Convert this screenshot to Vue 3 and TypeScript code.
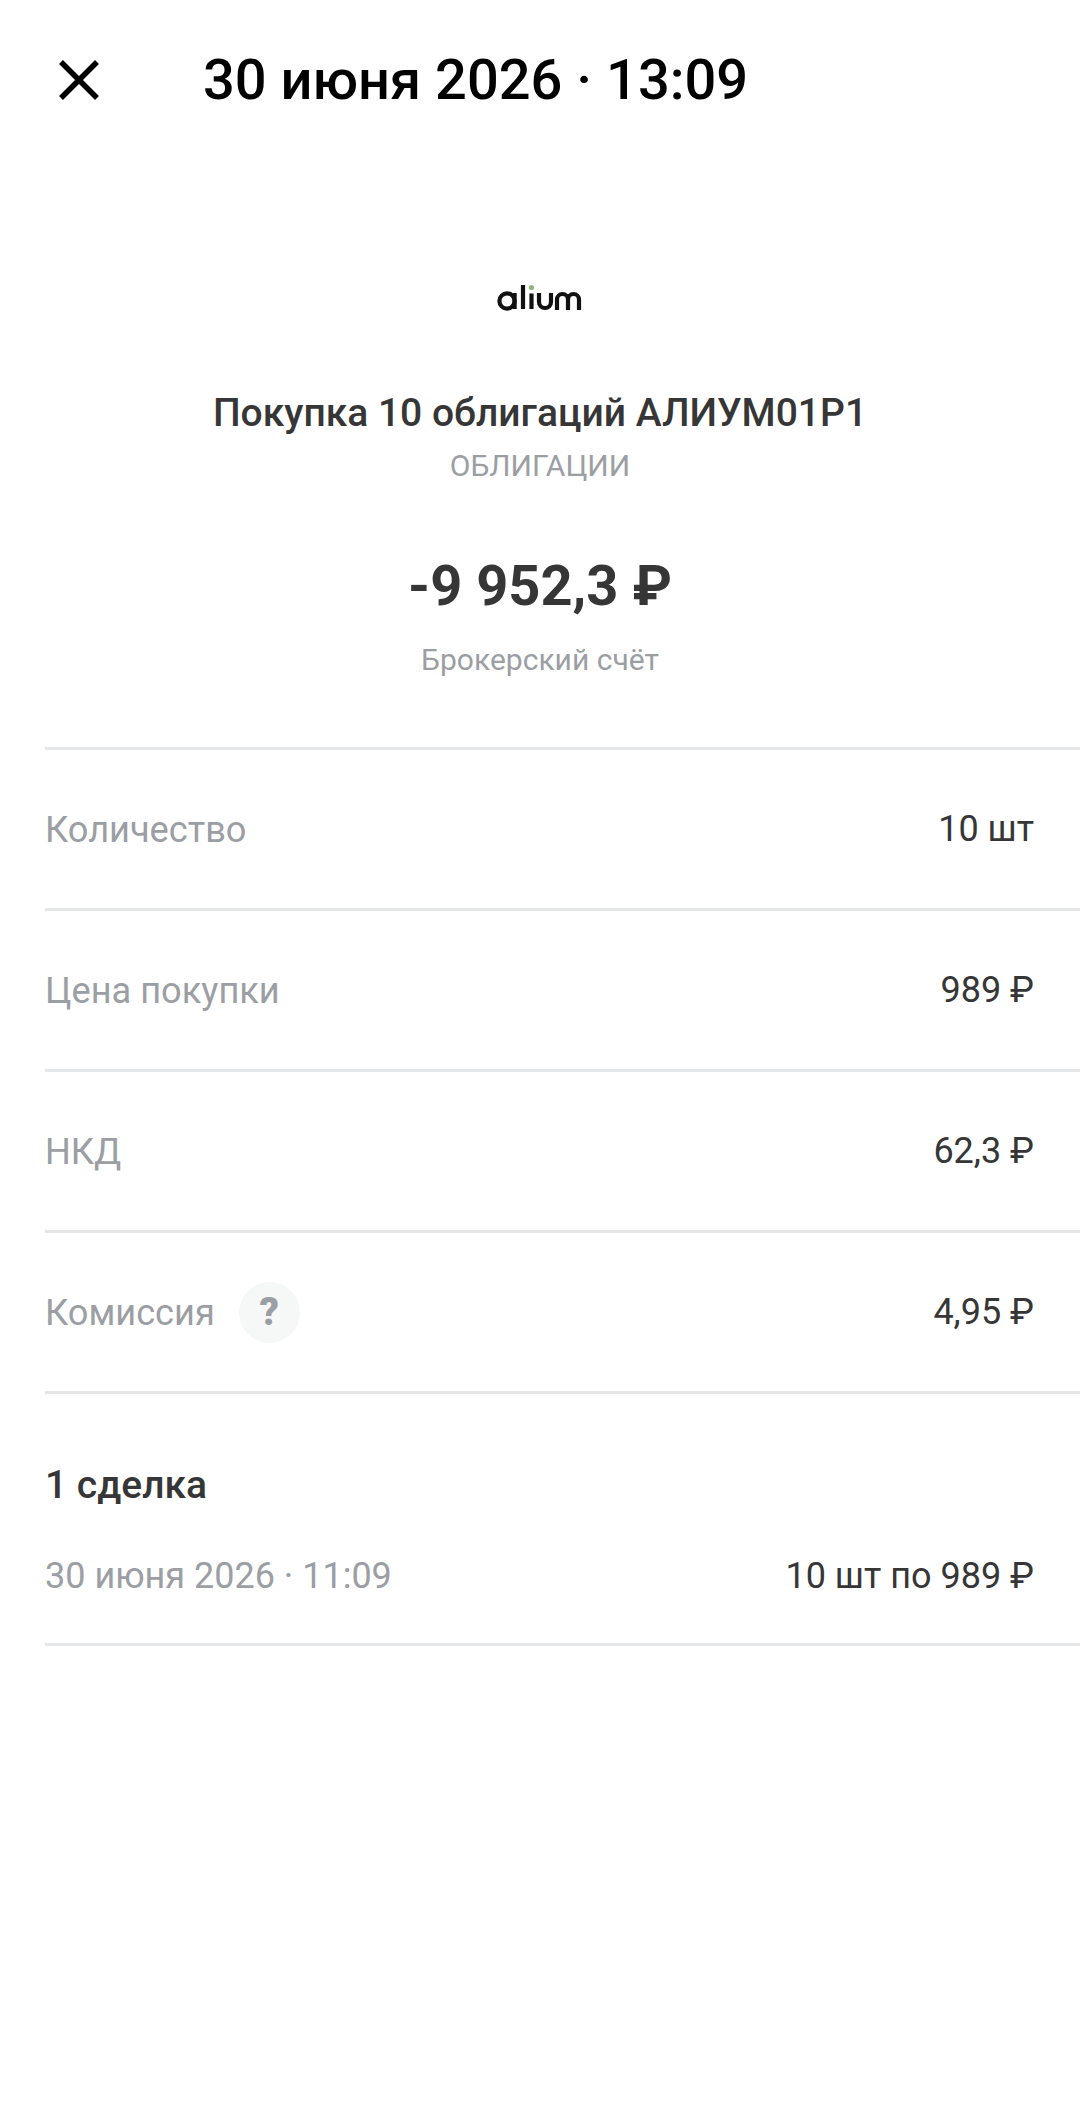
<script setup lang="ts">
interface Row { label: string; value: string; help?: boolean }
const rows: Row[] = [
  { label: 'Количество', value: '10 шт' },
  { label: 'Цена покупки', value: '989 ₽' },
  { label: 'НКД', value: '62,3 ₽' },
  { label: 'Комиссия', value: '4,95 ₽', help: true },
]
</script>

<template>
  <main class="page">
    <header class="top">
      <svg class="close" width="48" height="48" viewBox="0 0 48 48" fill="none">
        <path d="M6 6 L42 42 M42 6 L6 42" stroke="#000" stroke-width="5.5" />
      </svg>
      <h1 class="date">30 июня 2026 · 13:09</h1>
    </header>

    <section class="hero">
      <svg class="logo" width="86" height="28" viewBox="0 0 86 28" fill="none">
        <circle cx="10" cy="17" r="7.6" stroke="#111" stroke-width="4.2" />
        <path d="M17.6 9 V25" stroke="#111" stroke-width="4.2" />
        <path d="M26 1 V25" stroke="#111" stroke-width="4.2" />
        <circle cx="34.5" cy="3.5" r="2.6" fill="#8fb878" />
        <path d="M34.5 9.5 V25" stroke="#111" stroke-width="4.2" />
        <path d="M42 9 V18 a6 6 0 0 0 12 0 V9" stroke="#111" stroke-width="4.2" />
        <path d="M60 26 V15.5 a5.5 5.5 0 0 1 11 0 V26 M71 15.5 a5.5 5.5 0 0 1 11 0 V26" stroke="#111" stroke-width="4.2" />
      </svg>
      <h2 class="name">Покупка 10 облигаций АЛИУМ01Р1</h2>
      <p class="kind">ОБЛИГАЦИИ</p>
      <p class="amount">-9 952,3 ₽</p>
      <p class="account">Брокерский счёт</p>
    </section>

    <section class="rows">
      <div v-for="row in rows" :key="row.label" class="row">
        <span class="label">
          {{ row.label }}
          <span v-if="row.help" class="help">?</span>
        </span>
        <span class="value">{{ row.value }}</span>
      </div>
    </section>

    <section class="deals">
      <h3 class="deals-title">1 сделка</h3>
      <div class="deal">
        <span class="label">30 июня 2026 · 11:09</span>
        <span class="value">10 шт по 989 ₽</span>
      </div>
    </section>
  </main>
</template>

<style>
html, body { margin: 0; background: #fff; }
</style>

<style scoped>
.page {
  width: 1080px;
  height: 2121px;
  background: #fff;
  font-family: Roboto, "Noto Sans", sans-serif;
  overflow: hidden;
}
h1, h2, h3, p { margin: 0; font-weight: 400; }
.top {
  height: 160px;
  display: flex;
  align-items: center;
  padding-left: 55px;
  box-sizing: border-box;
}
.close { flex: none; }
.date {
  margin-left: 100px;
  font-size: 56px;
  font-weight: 500;
  color: #000;
  line-height: 1;
}
.hero {
  display: flex;
  flex-direction: column;
  align-items: center;
  padding-top: 124px;
}
.logo { display: block; }
.name {
  margin-top: 76px;
  font-size: 39px;
  line-height: 50px;
  font-weight: 500;
  color: #363636;
}
.kind {
  margin-top: 3px;
  font-size: 30px;
  line-height: 50px;
  color: #9b9ea3;
}
.amount {
  margin-top: 60px;
  font-size: 56px;
  line-height: 70px;
  font-weight: 700;
  color: #363636;
}
.account {
  margin-top: 18px;
  font-size: 30px;
  line-height: 42px;
  color: #9b9ea3;
}
.rows {
  margin-top: 66px;
  margin-left: 45px;
  border-top: 3px solid #e4e6e8;
}
.row {
  height: 158px;
  display: flex;
  align-items: center;
  justify-content: space-between;
  padding-right: 46px;
  border-bottom: 3px solid #e4e6e8;
}
.label {
  display: flex;
  align-items: center;
  font-size: 36.2px;
  color: #9b9ea3;
}
.value {
  font-size: 36px;
  color: #363636;
}
.help {
  width: 61px;
  height: 61px;
  margin-left: 24px;
  border-radius: 50%;
  background: #f6f7f7;
  display: flex;
  align-items: center;
  justify-content: center;
  font-size: 38px;
  font-weight: 900;
  color: #9b9ea3;
}
.deals {
  margin-left: 45px;
  padding-top: 69px;
  border-bottom: 3px solid #e4e6e8;
}
.deals-title {
  font-size: 39px;
  line-height: 44px;
  font-weight: 500;
  color: #363636;
}
.deal {
  margin-top: 47px;
  padding: 0 46px 45px 0;
  display: flex;
  justify-content: space-between;
  align-items: center;
  line-height: 44px;
}
.deal .label {
  font-size: 36px;
}
</style>
